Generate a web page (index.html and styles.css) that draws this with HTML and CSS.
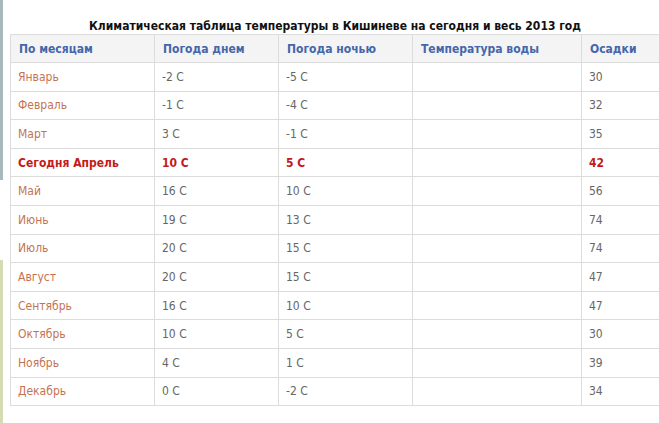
FILE: index.html
```html
<!DOCTYPE html>
<html lang="ru">
<head>
<meta charset="utf-8">
<title>Климатическая таблица</title>
<link rel="stylesheet" href="styles.css">
</head>
<body>
<div class="page">
<table class="climate">
<caption>Климатическая таблица температуры в Кишиневе на сегодня и весь 2013 год</caption>
<colgroup>
<col class="c1"><col class="c2"><col class="c3"><col class="c4"><col class="c5">
</colgroup>
<thead>
<tr><th>По месяцам</th><th>Погода днем</th><th>Погода ночью</th><th>Температура воды</th><th>Осадки</th></tr>
</thead>
<tbody>
<tr><td class="m">Январь</td><td>-2 C</td><td>-5 C</td><td></td><td>30</td></tr>
<tr><td class="m">Февраль</td><td>-1 C</td><td>-4 C</td><td></td><td>32</td></tr>
<tr><td class="m">Март</td><td>3 C</td><td>-1 C</td><td></td><td>35</td></tr>
<tr class="today"><td class="m">Сегодня Апрель</td><td>10 C</td><td>5 C</td><td></td><td>42</td></tr>
<tr><td class="m">Май</td><td>16 C</td><td>10 C</td><td></td><td>56</td></tr>
<tr><td class="m">Июнь</td><td>19 C</td><td>13 C</td><td></td><td>74</td></tr>
<tr><td class="m">Июль</td><td>20 C</td><td>15 C</td><td></td><td>74</td></tr>
<tr><td class="m">Август</td><td>20 C</td><td>15 C</td><td></td><td>47</td></tr>
<tr><td class="m">Сентябрь</td><td>16 C</td><td>10 C</td><td></td><td>47</td></tr>
<tr><td class="m">Октябрь</td><td>10 C</td><td>5 C</td><td></td><td>30</td></tr>
<tr><td class="m">Ноябрь</td><td>4 C</td><td>1 C</td><td></td><td>39</td></tr>
<tr><td class="m">Декабрь</td><td>0 C</td><td>-2 C</td><td></td><td>34</td></tr>
</tbody>
</table>
</div>
</body>
</html>
```
FILE: styles.css
```css
html, body {
  margin: 0;
  padding: 0;
  background: #fff;
}
body {
  font-family: "DejaVu Sans Condensed", "DejaVu Sans", sans-serif;
  font-size: 12px;
  color: #555;
}
.page {
  padding: 19px 0 0 10px;
  min-height: 404px;
  background:
    linear-gradient(#a8b8bf, #a8b8bf) 0 0 / 3px 180px no-repeat,
    linear-gradient(#d6dbb4, #d6dbb4) 0 260px / 3px 163px no-repeat;
}
.climate {
  border-collapse: collapse;
  width: 649px;
  table-layout: fixed;
}
.climate caption {
  font-weight: bold;
  font-size: 12px;
  color: #111;
  padding-bottom: 1px;
  line-height: 14px;
}
.c1 { width: 144px; }
.c2 { width: 124px; }
.c3 { width: 134px; }
.c4 { width: 169px; }
.c5 { width: 78px; }
.climate th,
.climate td {
  border: 1px solid #dcdcdc;
  text-align: left;
  height: 28.6px;
  padding: 0 7px;
  box-sizing: border-box;
  line-height: 14px;
}
.climate th {
  background: #f4f4f4;
  color: #4466aa;
  font-weight: bold;
  padding-left: 8px;
  height: 28px;
}
.climate td {
  color: #666;
}
.climate td.m {
  color: #c47352;
}
.climate tr.today td {
  color: #c41a1a;
  font-weight: bold;
}
```
